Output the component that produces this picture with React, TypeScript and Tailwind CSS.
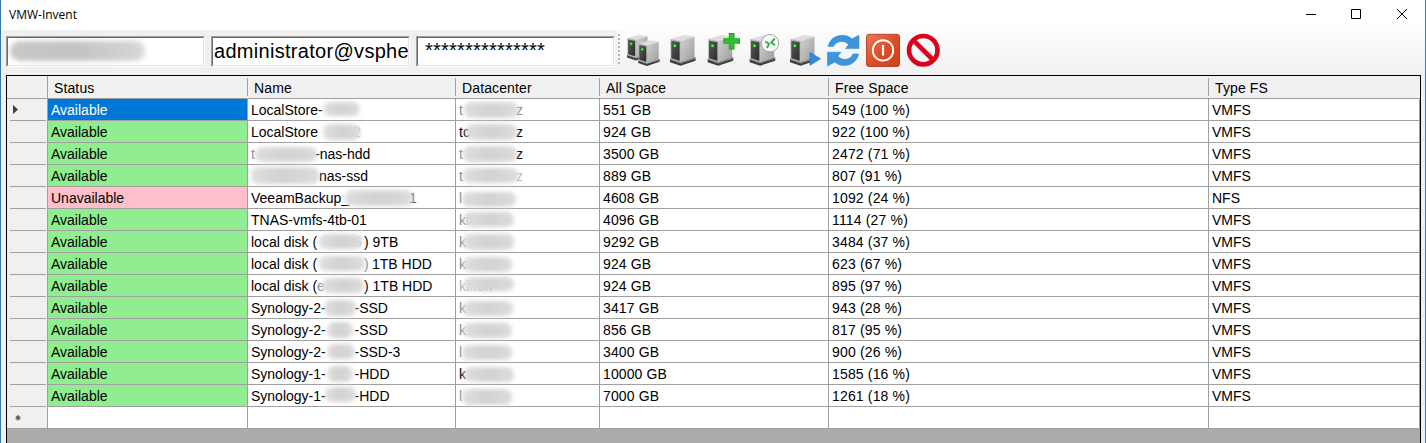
import React from 'react';

type Blob = [left: number, top: number, width: number, height: number];
type Frag = { x: number; t: string; c?: string };
type Row = {
  name: Frag[];
  nameBlob?: Blob;
  dc: Frag[];
  dcBlob: Blob;
  all: string;
  free: string;
  fs: string;
  down?: boolean;
};

const F = 'text-[#8a8a8a]';

const rows: Row[] = [
  { name: [{ x: 3, t: 'LocalStore-' }], nameBlob: [75, 3, 37, 14], dc: [{ x: 3, t: 't', c: F }, { x: 60, t: 'z', c: F }], dcBlob: [8, 3, 54, 16], all: '551 GB', free: '549 (100 %)', fs: 'VMFS' },
  { name: [{ x: 3, t: 'LocalStore' }, { x: 105, t: '2', c: 'text-[#bbbbbb]' }], nameBlob: [75, 3, 37, 16], dc: [{ x: 3, t: 'tc' }, { x: 60, t: 'z' }], dcBlob: [10, 3, 51, 16], all: '924 GB', free: '922 (100 %)', fs: 'VMFS' },
  { name: [{ x: 3, t: 't', c: F }, { x: 67, t: '-nas-hdd' }], nameBlob: [7, 4, 62, 15], dc: [{ x: 3, t: 't', c: F }, { x: 60, t: 'z' }], dcBlob: [7, 3, 54, 16], all: '3500 GB', free: '2472 (71 %)', fs: 'VMFS' },
  { name: [{ x: 71, t: 'nas-ssd' }], nameBlob: [3, 2, 68, 17], dc: [{ x: 3, t: 't', c: F }, { x: 60, t: 'z', c: 'text-[#bbbbbb]' }], dcBlob: [7, 3, 55, 15], all: '889 GB', free: '807 (91 %)', fs: 'VMFS' },
  { name: [{ x: 3, t: 'VeeamBackup_' }, { x: 161, t: '1', c: 'text-[#555555]' }], nameBlob: [97, 3, 68, 16], dc: [{ x: 3, t: 'l', c: F }], dcBlob: [6, 5, 54, 15], all: '4608 GB', free: '1092 (24 %)', fs: 'NFS', down: true },
  { name: [{ x: 3, t: 'TNAS-vmfs-4tb-01' }], dc: [{ x: 3, t: 'ki', c: F }], dcBlob: [8, 3, 50, 15], all: '4096 GB', free: '1114 (27 %)', fs: 'VMFS' },
  { name: [{ x: 3, t: 'local disk (' }, { x: 106, t: '6', c: 'text-[#bbbbbb]' }, { x: 116, t: ') 9TB' }], nameBlob: [71, 3, 43, 15], dc: [{ x: 3, t: 'k', c: F }], dcBlob: [7, 3, 51, 16], all: '9292 GB', free: '3484 (37 %)', fs: 'VMFS' },
  { name: [{ x: 3, t: 'local disk (' }, { x: 116, t: ')', c: F }, { x: 124, t: '1TB HDD' }], nameBlob: [71, 3, 46, 15], dc: [{ x: 3, t: 'k', c: F }], dcBlob: [7, 4, 49, 15], all: '924 GB', free: '623 (67 %)', fs: 'VMFS' },
  { name: [{ x: 3, t: 'local disk (' }, { x: 69, t: 'e', c: F }, { x: 116, t: ') 1TB HDD' }], nameBlob: [74, 3, 42, 15], dc: [{ x: 3, t: 'kinon', c: 'text-[#b0b0b0]' }], dcBlob: [8, 2, 50, 14], all: '924 GB', free: '895 (97 %)', fs: 'VMFS' },
  { name: [{ x: 3, t: 'Synology-2-' }, { x: 106.5, t: '-SSD' }], nameBlob: [76, 3, 32, 16], dc: [{ x: 3, t: 'k', c: F }], dcBlob: [7, 4, 50, 15], all: '3417 GB', free: '943 (28 %)', fs: 'VMFS' },
  { name: [{ x: 3, t: 'Synology-2-' }, { x: 106.5, t: '-SSD' }], nameBlob: [79, 3, 26, 16], dc: [{ x: 3, t: 'k', c: F }], dcBlob: [7, 4, 49, 15], all: '856 GB', free: '817 (95 %)', fs: 'VMFS' },
  { name: [{ x: 3, t: 'Synology-2-' }, { x: 106.5, t: '-SSD-3' }], nameBlob: [79, 3, 28, 15], dc: [{ x: 3, t: 'l', c: F }], dcBlob: [6, 4, 50, 15], all: '3400 GB', free: '900 (26 %)', fs: 'VMFS' },
  { name: [{ x: 3, t: 'Synology-1-' }, { x: 106.5, t: '-HDD' }], nameBlob: [79, 3, 26, 16], dc: [{ x: 3, t: 'k' }], dcBlob: [8, 4, 50, 15], all: '10000 GB', free: '1585 (16 %)', fs: 'VMFS' },
  { name: [{ x: 3, t: 'Synology-1-' }, { x: 106.5, t: '-HDD' }], nameBlob: [77, 2, 31, 15], dc: [{ x: 3, t: 'l', c: F }], dcBlob: [6, 4, 50, 16], all: '7000 GB', free: '1261 (18 %)', fs: 'VMFS' },
];

const COLS = 'grid grid-cols-[41px_200px_208px_144px_229px_380px_211px]';
const CELL = 'h-[22px] border-r border-b border-[#a0a0a0] pt-px pl-[3px] whitespace-nowrap';

function Smudge({ box }: { box: Blob }) {
  return (
    <span
      className="absolute rounded-[7px] bg-linear-to-r from-[#dedede] via-[#d2d2d2] to-[#dcdcdc] blur-[2px]"
      style={{ left: box[0], top: box[1], width: box[2], height: box[3] }}
    />
  );
}

function Masked({ parts, blob }: { parts: Frag[]; blob?: Blob }) {
  return (
    <div className="relative h-[22px] border-r border-b border-[#a0a0a0]">
      {parts.map((p) => (
        <span key={p.x} className={`absolute top-px whitespace-nowrap ${p.c ?? ''}`} style={{ left: p.x }}>
          {p.t}
        </span>
      ))}
      {blob && <Smudge box={blob} />}
    </div>
  );
}

function Server({ x = 0, y = 0, s = 1 }: { x?: number; y?: number; s?: number }) {
  return (
    <g transform={`translate(${x} ${y}) scale(${s})`}>
      <path d="M0 24 10.5 27 25.500 22.5V26L10.5 31 0 27.5Z" fill="#3c3c3c" />
      <path d="M0 24 10.5 27.5 25.500 23V24L10.5 28.7 0 25Z" fill="#8d8d8d" />
      <path d="M.5 4.2 14 .2 24.5 2 10.8 6.5Z" fill="#dedede" />
      <path d="M10.5 6.5 24.5 2V23L10.5 27.6Z" fill="url(#side)" />
      <path d="M.5 4.2 10.8 6.3V27.6L.5 24.4Z" fill="#b4b4b4" />
      <path d="M1.3 6 9.6 7.600V26L1.3 23.6Z" fill="url(#front)" />
      <circle cx="4.8" cy="11" r="2.3" fill="#1b7a22" />
      <circle cx="4.8" cy="11" r="1.3" fill="#4dff55" />
    </g>
  );
}

function Icon({ children }: { children: React.ReactNode }) {
  return (
    <svg className="block h-9 w-10 shrink-0" viewBox="0 0 40 36">
      {children}
    </svg>
  );
}

function Toolbar() {
  return (
    <div className="flex h-[45px] flex-1 bg-linear-to-b from-[#fdfdfd] to-[#f0f0f0] pt-[3px]">
      <svg className="block h-9 w-2 shrink-0" viewBox="0 0 8 36">
        <path d="M2 1V32" stroke="#b5b5b5" strokeWidth="2" strokeDasharray="2 2" />
      </svg>
      <Icon>
        <defs>
          <linearGradient id="side" x1="0" y1="0" x2="1" y2="1">
            <stop offset="0" stopColor="#d2d2d2" />
            <stop offset="1" stopColor="#9c9c9c" />
          </linearGradient>
          <linearGradient id="front" x1="0" y1="0" x2="1" y2="1">
            <stop offset="0" stopColor="#5a5a5a" />
            <stop offset="1" stopColor="#2b2b2b" />
          </linearGradient>
        </defs>
        <Server x={2} y={1.5} s={0.84} />
        <Server x={13.2} y={7} s={0.84} />
      </Icon>
      <Icon><Server x={5} y={1.7} /></Icon>
      <Icon>
        <Server x={2.7} y={1.7} />
        <path d="M23.800 0h5.700v5.200h5.500v5.600h-5.500v5.600h-5.700v-5.600h-5.500V5.200h5.500Z" fill="#1ba321" />
        <path d="M24.700 1h3.900v5.100H34v3.800h-5.400v5.500h-3.900V9.900h-5.400V6.100h5.400Z" fill="#33bd36" />
      </Icon>
      <Icon>
        <Server x={4.7} y={1.7} />
        <circle cx="25" cy="10.2" r="8.700" fill="#fafafa" stroke="#a2a2a2" strokeWidth="1" />
        <path d="m20.200 8.500 3.800 2.300-2 4.200M29.800 5.500l-3.500 4 3.800 2.700" fill="none" stroke="#2eb044" strokeWidth="1.900" />
      </Icon>
      <Icon>
        <Server x={5} y={1.7} />
        <path d="M25 19.500v12.800l10.500-6.600Z" fill="#358bd7" stroke="#2479c3" strokeWidth=".7" />
      </Icon>
      <Icon>
        <g fill="#3d95db" stroke="#2681cd" strokeWidth=".5">
          <path d="M3 13.400C5 6 10.500 2.300 17.500 2.300c4 0 7 1.300 9.300 3.600L34 2.200V15.600H20.500l3-3.800c-1.800-2.300-4-3.300-6.600-3.300-4 0-6.600 1.600-8.400 4.900Z" />
          <path d="M33.700 21C31.700 28.500 26.200 32.500 19.200 32.500c-4 0-7-1.300-9.300-3.600L2.500 33V19.200H16l-3 3.900c1.800 2.300 4 3.300 6.600 3.300 4 0 6.700-1.700 8.400-5.400Z" />
        </g>
      </Icon>
      <Icon>
        <defs>
          <linearGradient id="pw" x1="0" y1="0" x2="1" y2="1">
            <stop offset="0" stopColor="#e77b57" />
            <stop offset=".5" stopColor="#e04e26" />
            <stop offset="1" stopColor="#cf3f18" />
          </linearGradient>
        </defs>
        <rect x="1.5" y="1.3" width="33" height="32.200" rx="2.5" fill="url(#pw)" stroke="#b8472a" />
        <circle cx="18" cy="17.400" r="10.200" fill="none" stroke="#fff" strokeWidth="1.900" />
        <path d="M18 12v10.500" stroke="#fff" strokeWidth="2.200" />
      </Icon>
      <Icon>
        <circle cx="18.300" cy="17.200" r="14.200" fill="#fafafa" stroke="#d8051c" strokeWidth="4.700" />
        <path d="m8.500 7.400 19.600 19.600" stroke="#d8051c" strokeWidth="4.700" />
      </Icon>
    </div>
  );
}

function Field({ children }: { children: React.ReactNode }) {
  return (
    <div className="relative h-[31px] w-[199px] shrink-0 overflow-hidden border border-t-[#a0a0a0] border-r-white border-b-white border-l-[#a0a0a0]">
      <div className="relative h-full overflow-hidden border border-t-[#696969] border-r-[#e3e3e3] border-b-[#e3e3e3] border-l-[#696969] bg-white text-[20px] whitespace-nowrap">
        {children}
      </div>
    </div>
  );
}

export default function App() {
  return (
    <div className="h-[443px] w-[1426px] overflow-hidden border-x border-l-[#2f7ab8] border-r-[#2a86c0] bg-[#f0f0f0] font-['Liberation_Sans',Arial,sans-serif] text-[14px] text-black">
      <header className="flex h-[30px] items-center justify-between bg-white pl-2">
        <span className="font-['Open_Sans','Noto_Sans',sans-serif] text-[12px]">VMW-Invent</span>
        <svg className="block h-[30px] w-[136px]" viewBox="0 0 136 30" fill="none" stroke="#000">
          <path d="M17 14.500h10" />
          <path d="M62.500 9.500h9v9h-9z" />
          <path d="m108 9 10 10m0-10-10 10" />
        </svg>
      </header>

      <div className="flex h-[45px]">
        <div className="flex gap-[6px] pt-[6px] pr-[2px] pl-[5px]">
          <Field>
            <span className="absolute top-[3px] left-[2px] h-[20px] w-[135px] rounded-[10px] bg-linear-to-r from-[#c8c8c8] via-[#c3c3c3] to-[#d8d8d8] blur-[2.5px]" />
          </Field>
          <Field>
            <span className="block pl-px leading-[27px] tracking-[0.3px]">administrator@vsphe</span>
          </Field>
          <Field>
            <span className="block pl-[7px] leading-[24px] tracking-[0.22px]">***************</span>
          </Field>
        </div>
        <Toolbar />
      </div>

      <main className="ml-[5px] h-[368px] w-[1415px] border-x border-t border-black bg-[#ababab] leading-[21px]">
        <div className={`${COLS} h-[23px] border-b border-[#a0a0a0] bg-[#f0f0f0] tracking-[0.12px]`}>
          {['', 'Status', 'Name', 'Datacenter', 'All Space', 'Free Space', 'Type FS'].map((h, i) => (
            <div key={i} className={`flex items-center pt-[2px] pl-[6px] ${i === 6 ? '' : i === 0 ? 'border-r border-[#a0a0a0]' : 'relative after:absolute after:top-[2px] after:right-0 after:h-[18px] after:w-px after:bg-[#a0a0a0]'}`}>
              {h}
            </div>
          ))}
        </div>
        {rows.map((r, i) => (
          <div key={i} className={`${COLS} h-[22px] bg-white`}>
            <div className="flex border-r border-[#a0a0a0] bg-[#f0f0f0] pr-px pl-[3px]">
              <div className="flex-1 border-b border-[#a0a0a0]">
                {i === 0 && (
                  <svg className="ml-[3px] block h-[21px] w-2" viewBox="0 0 8 21">
                    <path d="M0 6v9l5-4.500Z" fill="#404040" />
                  </svg>
                )}
              </div>
            </div>
            <div className={`${CELL} ${i === 0 ? 'bg-[#0078d7] text-white' : r.down ? 'bg-[#ffc0cb]' : 'bg-[#90ee90]'}`}>
              {r.down ? 'Unavailable' : 'Available'}
            </div>
            <Masked parts={r.name} blob={r.nameBlob} />
            <Masked parts={r.dc} blob={r.dcBlob} />
            <div className={`${CELL} tracking-[0.12px]`}>{r.all}</div>
            <div className={`${CELL} tracking-[0.16px]`}>{r.free}</div>
            <div className={CELL}>{r.fs}</div>
          </div>
        ))}
        <div className={`${COLS} h-[22px] bg-white`}>
          <div className="border-r border-b border-[#a0a0a0] bg-[#f0f0f0]">
            <svg className="ml-[8px] block h-[21px] w-[6px]" viewBox="0 0 6 21" stroke="#404040">
              <path d="M3 8v5.500M.5 10.800h5M1 8.800l4 4M5 8.800l-4 4" />
            </svg>
          </div>
          {[1, 2, 3, 4, 5, 6].map((c) => (
            <div key={c} className="border-r border-b border-[#a0a0a0]" />
          ))}
        </div>
      </main>
    </div>
  );
}
